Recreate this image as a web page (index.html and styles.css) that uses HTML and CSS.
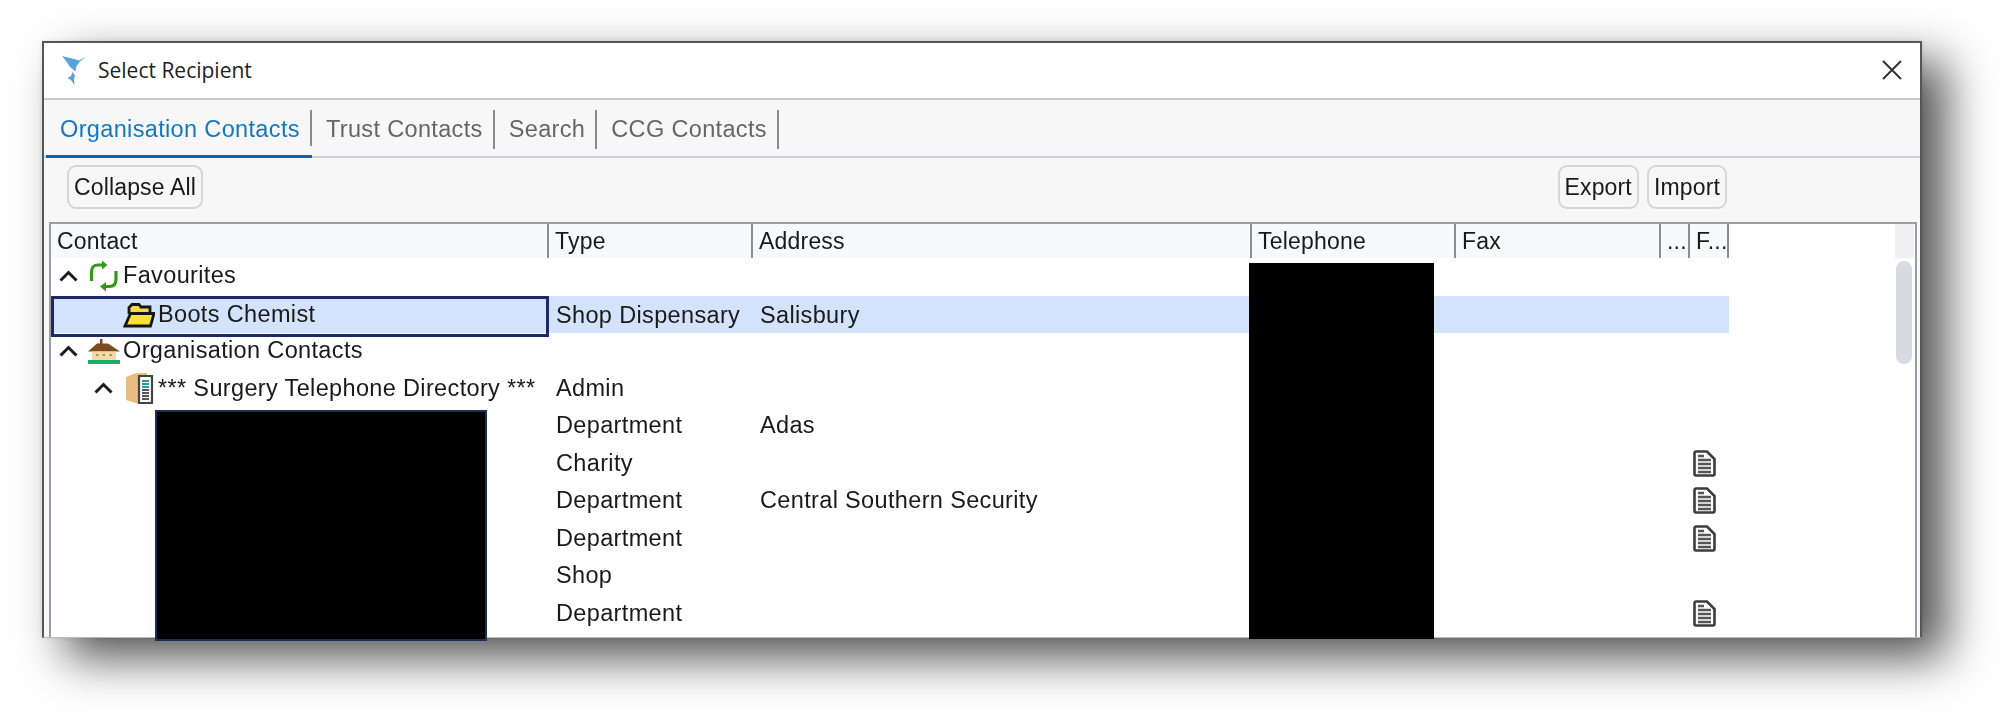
FILE: index.html
```html
<!DOCTYPE html>
<html lang="en">
<head>
<meta charset="utf-8">
<title>Select Recipient</title>
<link rel="stylesheet" href="styles.css">
</head>
<body>
<svg class="defs" width="0" height="0" aria-hidden="true">
  <defs>
    <symbol id="chev" viewBox="0 0 24 14"><path d="M4 11.500 12 3.500l8 8" fill="none" stroke="#1c1c1c" stroke-width="3"/></symbol>
    <symbol id="doc" viewBox="0 0 23 27">
      <path d="M1.500 3a1.500 1.500 0 0 1 1.500-1.500H14L21.500 9v15a1.500 1.500 0 0 1-1.500 1.500H3A1.500 1.500 0 0 1 1.500 24z" fill="#fff" stroke="#3c3c3c" stroke-width="2.600"/>
      <path d="M5 6h6M5 10h13M5 14h13M5 18h13M5 22h13" stroke="#555" stroke-width="2.300"/>
    </symbol>
  </defs>
</svg>
<main class="window">
  <header class="titlebar">
    <svg class="logo" viewBox="0 0 26 30"><path d="M1 1 13 4 18 5.500 25 1.500 19 6.500 15.500 11 14.500 16.500 9 12 5 6z" fill="#5aa2dc"/><path d="M11.500 17 14 20.500 13 24 13.500 30 10 25 6.500 23 10 21z" fill="#5aa2dc"/></svg>
    <h1 class="title">Select Recipient</h1>
    <svg class="close" viewBox="0 0 20 20"><path d="M1 1l18 18M19 1 1 19" stroke="#333" stroke-width="2" fill="none"/></svg>
  </header>
  <nav class="tabs">
    <span class="tab tab-active">Organisation Contacts</span>
    <span class="tab">Trust Contacts</span>
    <span class="tab">Search</span>
    <span class="tab">CCG Contacts</span>
  </nav>
  <div class="toolbar">
    <button class="btn">Collapse All</button>
    <span class="spacer"></span>
    <button class="btn">Export</button>
    <button class="btn">Import</button>
  </div>
  <section class="table">
    <div class="row head">
      <div class="cell"><span>Contact</span></div>
      <div class="cell"><span>Type</span></div>
      <div class="cell"><span>Address</span></div>
      <div class="cell"><span>Telephone</span></div>
      <div class="cell"><span>Fax</span></div>
      <div class="cell cell-tiny"><span>...</span></div>
      <div class="cell cell-f"><span>F...</span></div>
    </div>
    <div class="row">
      <div class="cell tree">
        <svg class="twisty"><use href="#chev"/></svg>
        <svg class="ico" viewBox="0 0 32 32"><path d="M3.500 21V12Q3.500 5 10 5H15" fill="none" stroke="#35991c" stroke-width="3.200"/><path d="M14 .5 19.500 5 14 9.500z" fill="#35991c"/><path d="M28 11V19Q28 26.500 21.500 26.500H16" fill="none" stroke="#35991c" stroke-width="3.200"/><path d="M18 22 12 26.500 18 31.500z" fill="#35991c"/></svg>
        <span class="label">Favourites</span>
      </div>
      <div class="cell"></div><div class="cell"></div><div class="cell"></div><div class="cell"></div><div class="cell"></div><div class="cell"></div>
    </div>
    <div class="row selected">
      <div class="cell tree level1 focus">
        <span class="twisty"></span>
        <svg class="ico" viewBox="0 0 32 32"><path d="M6 15V8.500L9 5.500H16l2 2.500h9v6" fill="#f5d94a" stroke="#161616" stroke-width="2.800"/><path d="M2 27 7.500 14.500H31L27.500 27z" fill="#f8e332" stroke="#161616" stroke-width="2.800"/></svg>
        <span class="label">Boots Chemist</span>
      </div>
      <div class="cell"><span>Shop Dispensary</span></div>
      <div class="cell"><span>Salisbury</span></div>
      <div class="cell"></div><div class="cell"></div><div class="cell"></div><div class="cell"></div>
    </div>
    <div class="row">
      <div class="cell tree">
        <svg class="twisty"><use href="#chev"/></svg>
        <svg class="ico" viewBox="0 0 32 32"><path d="M0 16.500 9 8.500h3V4h2.500v4.500H20l12 8z" fill="#7b4a1e"/><path d="M4 16.500h24V25H4z" fill="#f6d9a8"/><path d="M8 20h2.500M14.500 20H17M21.500 20H24" stroke="#8aa05a" stroke-width="2"/><path d="M0 25h32v4H0z" fill="#1fae6a"/></svg>
        <span class="label">Organisation Contacts</span>
      </div>
      <div class="cell"></div><div class="cell"></div><div class="cell"></div><div class="cell"></div><div class="cell"></div><div class="cell"></div>
    </div>
    <div class="row">
      <div class="cell tree level1">
        <svg class="twisty"><use href="#chev"/></svg>
        <svg class="ico" viewBox="0 0 32 32"><path d="M3 5 13 1h11v3H16V32L3 28z" fill="#e7bd85"/><path d="M16 4h13v27H16z" fill="#fff" stroke="#444" stroke-width="2.200"/><path d="M19 9h7M19 12h7M19 15h7" stroke="#2d9d9a" stroke-width="2"/><path d="M19 18h7M19 21h7M19 24h7M19 27h7" stroke="#555" stroke-width="2"/></svg>
        <span class="label">*** Surgery Telephone Directory ***</span>
      </div>
      <div class="cell"><span>Admin</span></div>
      <div class="cell"></div><div class="cell"></div><div class="cell"></div><div class="cell"></div><div class="cell"></div>
    </div>
    <div class="row">
      <div class="cell"></div>
      <div class="cell"><span>Department</span></div>
      <div class="cell"><span>Adas</span></div>
      <div class="cell"></div><div class="cell"></div><div class="cell"></div><div class="cell"></div>
    </div>
    <div class="row">
      <div class="cell"></div>
      <div class="cell"><span>Charity</span></div>
      <div class="cell"></div><div class="cell"></div><div class="cell"></div><div class="cell"></div>
      <div class="cell cell-f"><svg class="doc"><use href="#doc"/></svg></div>
    </div>
    <div class="row">
      <div class="cell"></div>
      <div class="cell"><span>Department</span></div>
      <div class="cell"><span>Central Southern Security</span></div>
      <div class="cell"></div><div class="cell"></div><div class="cell"></div>
      <div class="cell cell-f"><svg class="doc"><use href="#doc"/></svg></div>
    </div>
    <div class="row">
      <div class="cell"></div>
      <div class="cell"><span>Department</span></div>
      <div class="cell"></div><div class="cell"></div><div class="cell"></div><div class="cell"></div>
      <div class="cell cell-f"><svg class="doc"><use href="#doc"/></svg></div>
    </div>
    <div class="row">
      <div class="cell"></div>
      <div class="cell"><span>Shop</span></div>
      <div class="cell"></div><div class="cell"></div><div class="cell"></div><div class="cell"></div><div class="cell"></div>
    </div>
    <div class="row">
      <div class="cell"></div>
      <div class="cell"><span>Department</span></div>
      <div class="cell"></div><div class="cell"></div><div class="cell"></div><div class="cell"></div>
      <div class="cell cell-f"><svg class="doc"><use href="#doc"/></svg></div>
    </div>
    <div class="scroll-track"></div>
    <div class="scroll-thumb"></div>
    <div class="redact redact-names"></div>
    <div class="redact redact-phone"></div>
  </section>
</main>
</body>
</html>
```
FILE: styles.css
```css
* { box-sizing: border-box; }
html, body { margin: 0; height: 716px; background: #fff; overflow: hidden; }
body { padding: 41px 0 0 42px; font-family: "Liberation Sans", Arial, sans-serif; font-size: 23.500px; letter-spacing: .35px; color: #1a1a1a; }
.defs { position: absolute; }

.window {
  width: 1880px; height: 597px;
  background: #f7f7f7;
  border: 2px solid #565656; border-bottom: 1px solid #bbb;
  box-shadow: 24px 20px 44px rgba(0,0,0,.68), 0 0 5px rgba(0,0,0,.1);
  display: flex; flex-direction: column;
  filter: blur(.4px);
}

.titlebar { height: 57px; flex: none; background: #fff; border-bottom: 2px solid #c9c9c9; display: flex; align-items: center; padding: 0 18px 1px 17px; }
.logo { width: 26px; height: 30px; flex: none; }
.title { margin: 0 0 0 11px; font: 400 21px "Open Sans", sans-serif; letter-spacing: 0; color: #222; flex: 1; }
.close { width: 20px; height: 20px; flex: none; }

.tabs { height: 58px; flex: none; display: flex; align-items: stretch; border-bottom: 2px solid #cdcdd2; padding: 0 2px 0 2px; }
.tab { height: 58px; padding: 0 12px 0 14px; display: flex; align-items: center; color: #666; position: relative; }
.tab::after { content: ""; position: absolute; right: 0; top: 10px; bottom: 9px; width: 2px; background: #8a8a8a; }
.tab-active { color: #1478c0; border-bottom: 3px solid #0a66b5; padding-top: 3px; }

.toolbar { height: 64px; flex: none; display: flex; align-items: center; padding: 0 193px 6px 23px; gap: 8px; }
.spacer { flex: 1; }
.btn { height: 44px; padding: 0 5px; background: #f7f7f7; border: 2px solid #d6d6d6; border-radius: 9px; font: inherit; font-size: 23px; letter-spacing: .15px; color: #1a1a1a; }

.table { position: relative; flex: 1; margin: 0 3px 0 5px; background: #fff; border: 2px solid #9c9ca4; border-bottom: 0; }
.row { display: grid; grid-template-columns: 498px 204px 499px 204px 205px 29px 39px; width: 1678px; height: 37.500px; }
.cell { display: flex; align-items: center; padding: 0 0 2px 7px; min-width: 0; white-space: nowrap; }
.head { height: 34px; background: #f7f9fb; }
.head .cell { border-right: 2px solid #8e8e8e; padding: 0 0 0 6px; font-size: 23px; letter-spacing: .2px; color: #1a1a1a; overflow: hidden; }
.cell-tiny { padding-left: 6px; }
.selected { background: #d3e3fb; }

.tree { padding-left: 5px; }
.level1 { padding-left: 40px; }
.twisty { width: 25px; height: 14px; flex: none; display: block; }
.ico { width: 32px; height: 32px; flex: none; margin-left: 7px; }
.label { margin-left: 3px; }
.focus { border: 3px solid #1c2a6a; padding: 0 0 3px 37px; }

.doc { width: 23px; height: 27px; margin-left: -4px; }

.scroll-track { position: absolute; right: 1px; top: 0; width: 19px; height: 34px; background: #f0f0f0; }
.scroll-thumb { position: absolute; right: 3px; top: 37px; width: 16px; height: 103px; background: #d8dadf; border-radius: 8px; }

.redact { position: absolute; background: #000; }
.redact-names { left: 104px; top: 186px; width: 332px; height: 231px; border: 2px solid #1a2f55; }
.redact-phone { left: 1198px; top: 39px; width: 185px; height: 376px; }
```
